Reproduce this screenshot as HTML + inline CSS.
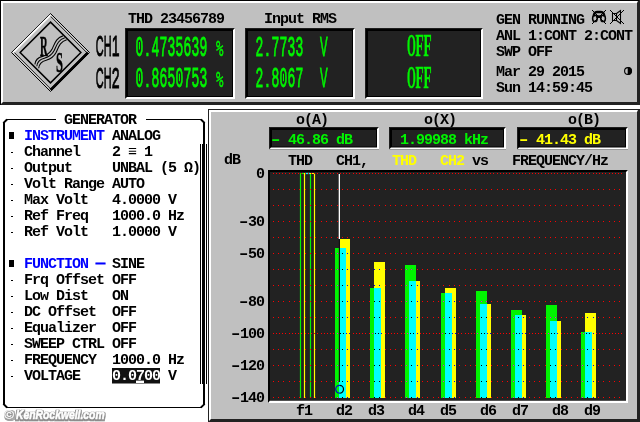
<!DOCTYPE html>
<html><head><meta charset="utf-8"><title>UPL</title>
<style>
html,body{margin:0;padding:0;background:#fff;overflow:hidden}
svg{display:block}
text{white-space:pre}
.m{font-family:"Liberation Mono",monospace;font-size:15px;letter-spacing:-1px}
</style></head><body>
<svg width="640" height="422" viewBox="0 0 640 422">
<rect width="640" height="422" fill="#fff"/>
<defs><filter id="ff" color-interpolation-filters="sRGB" filterUnits="userSpaceOnUse" x="0" y="0" width="640" height="422"><feOffset dx="0" dy="0" color-interpolation-filters="sRGB"/></filter></defs>
<g filter="url(#ff)">

<rect x="0" y="0" width="640" height="105" fill="#222"/>
<rect x="0" y="0" width="639" height="1" fill="#000"/><rect x="0" y="0" width="1" height="105" fill="#000"/>
<path d="M1 1H638L637 3H3V102L1 104Z" fill="#fff"/>
<rect x="3" y="3" width="634" height="99" fill="#c0c0c0"/>
<g fill="none" stroke-linejoin="miter">
<path d="M50.5 13.5L89.5 52.5L50.5 91.5L11.5 52.5Z" fill="#d0d0d0" stroke="#000" stroke-width="1"/>
<path d="M50.5 16.299999999999997L86.7 52.5M14.299999999999997 52.5L50.5 88.7" stroke="#000" stroke-width="1"/>
<path d="M13.200000000000003 52.5L50.5 15.200000000000003" stroke="#fff" stroke-width="1.7"/>
<path d="M87.9 52.5L50.5 89.9" stroke="#000" stroke-width="3"/>
<path d="M50.5 17.1L85.9 52.5L50.5 87.9L15.100000000000001 52.5Z" fill="#c0c0c0" stroke="none"/>
<path d="M50.5 22.1L80.9 52.5L50.5 82.9L20.1 52.5Z" fill="#c0c0c0" stroke="#000" stroke-width="1.5"/>
<path d="M36.5 66 C37 61 40 59 44 58 C49 56.5 52 54 54 50 C56.5 44.5 58 39.5 64.5 37.5" transform="translate(-1.6,-1.6)" stroke="#000" stroke-width="1.1"/>
<path d="M36.5 66 C37 61 40 59 44 58 C49 56.5 52 54 54 50 C56.5 44.5 58 39.5 64.5 37.5" transform="translate(0.3,0.3)" stroke="#000" stroke-width="1.1"/>
<path d="M36.5 66 C37 61 40 59 44 58 C49 56.5 52 54 54 50 C56.5 44.5 58 39.5 64.5 37.5" transform="translate(2.2,2.2)" stroke="#000" stroke-width="1.1"/>
</g>
<text transform="translate(43.8,55.8) scale(0.350,1)" font-weight="bold" text-anchor="middle" fill="#000" stroke="#000" stroke-width="0.4" style="font-family:'Liberation Serif',serif;font-size:30.5px;vector-effect:non-scaling-stroke" >R</text>
<text transform="translate(59.6,72.3) scale(0.410,1)" font-weight="bold" text-anchor="middle" fill="#000" stroke="#000" stroke-width="0.4" style="font-family:'Liberation Serif',serif;font-size:30.5px;vector-effect:non-scaling-stroke" >S</text>
<text transform="translate(99.6,55.6) scale(0.370,1)" font-weight="normal" text-anchor="middle" fill="#000" stroke="#000" stroke-width="0.75" style="font-family:'Liberation Sans',sans-serif;font-size:29.3px;vector-effect:non-scaling-stroke" >C</text><text transform="translate(107.6,55.6) scale(0.370,1)" font-weight="normal" text-anchor="middle" fill="#000" stroke="#000" stroke-width="0.75" style="font-family:'Liberation Sans',sans-serif;font-size:29.3px;vector-effect:non-scaling-stroke" >H</text><text transform="translate(115.6,55.6) scale(0.480,1)" font-weight="normal" text-anchor="middle" fill="#000" stroke="#000" stroke-width="0.75" style="font-family:'Liberation Sans',sans-serif;font-size:29.3px;vector-effect:non-scaling-stroke" >1</text>
<text transform="translate(99.6,87.6) scale(0.370,1)" font-weight="normal" text-anchor="middle" fill="#000" stroke="#000" stroke-width="0.75" style="font-family:'Liberation Sans',sans-serif;font-size:29.3px;vector-effect:non-scaling-stroke" >C</text><text transform="translate(107.6,87.6) scale(0.370,1)" font-weight="normal" text-anchor="middle" fill="#000" stroke="#000" stroke-width="0.75" style="font-family:'Liberation Sans',sans-serif;font-size:29.3px;vector-effect:non-scaling-stroke" >H</text><text transform="translate(115.6,87.6) scale(0.480,1)" font-weight="normal" text-anchor="middle" fill="#000" stroke="#000" stroke-width="0.75" style="font-family:'Liberation Sans',sans-serif;font-size:29.3px;vector-effect:non-scaling-stroke" >2</text>
<rect x="125" y="28" width="110" height="71" fill="#1e1e1e"/>
<rect x="126" y="29" width="109" height="70" fill="#000"/>
<path d="M235 28V99H125L127 97H233V30Z" fill="#fff"/>
<rect x="128" y="31" width="104" height="65" fill="#222"/>
<rect x="245" y="28" width="110" height="71" fill="#1e1e1e"/>
<rect x="246" y="29" width="109" height="70" fill="#000"/>
<path d="M355 28V99H245L247 97H353V30Z" fill="#fff"/>
<rect x="248" y="31" width="104" height="65" fill="#222"/>
<rect x="365" y="28" width="118" height="71" fill="#1e1e1e"/>
<rect x="366" y="29" width="117" height="70" fill="#000"/>
<path d="M483 28V99H365L367 97H481V30Z" fill="#fff"/>
<rect x="368" y="31" width="112" height="65" fill="#222"/>
<text transform="translate(139.5,55.5) scale(0.460,1)" font-weight="normal" text-anchor="middle" fill="#00f400" stroke="#00f400" stroke-width="0.75" style="font-family:'Liberation Sans',sans-serif;font-size:28.5px;vector-effect:non-scaling-stroke" >0</text><text transform="translate(147.5,55.5) scale(0.600,1)" font-weight="normal" text-anchor="middle" fill="#00f400" stroke="#00f400" stroke-width="0.6" style="font-family:'Liberation Sans',sans-serif;font-size:28.5px;vector-effect:non-scaling-stroke" >.</text><text transform="translate(155.5,55.5) scale(0.460,1)" font-weight="normal" text-anchor="middle" fill="#00f400" stroke="#00f400" stroke-width="0.75" style="font-family:'Liberation Sans',sans-serif;font-size:28.5px;vector-effect:non-scaling-stroke" >4</text><text transform="translate(163.5,55.5) scale(0.460,1)" font-weight="normal" text-anchor="middle" fill="#00f400" stroke="#00f400" stroke-width="0.75" style="font-family:'Liberation Sans',sans-serif;font-size:28.5px;vector-effect:non-scaling-stroke" >7</text><text transform="translate(171.5,55.5) scale(0.460,1)" font-weight="normal" text-anchor="middle" fill="#00f400" stroke="#00f400" stroke-width="0.75" style="font-family:'Liberation Sans',sans-serif;font-size:28.5px;vector-effect:non-scaling-stroke" >3</text><text transform="translate(179.5,55.5) scale(0.460,1)" font-weight="normal" text-anchor="middle" fill="#00f400" stroke="#00f400" stroke-width="0.75" style="font-family:'Liberation Sans',sans-serif;font-size:28.5px;vector-effect:non-scaling-stroke" >5</text><text transform="translate(187.5,55.5) scale(0.460,1)" font-weight="normal" text-anchor="middle" fill="#00f400" stroke="#00f400" stroke-width="0.75" style="font-family:'Liberation Sans',sans-serif;font-size:28.5px;vector-effect:non-scaling-stroke" >6</text><text transform="translate(195.5,55.5) scale(0.460,1)" font-weight="normal" text-anchor="middle" fill="#00f400" stroke="#00f400" stroke-width="0.75" style="font-family:'Liberation Sans',sans-serif;font-size:28.5px;vector-effect:non-scaling-stroke" >3</text><text transform="translate(203.5,55.5) scale(0.460,1)" font-weight="normal" text-anchor="middle" fill="#00f400" stroke="#00f400" stroke-width="0.75" style="font-family:'Liberation Sans',sans-serif;font-size:28.5px;vector-effect:non-scaling-stroke" >9</text> <text transform="translate(219.8,55.5) scale(0.560,1)" font-weight="normal" text-anchor="middle" fill="#00f400" stroke="#00f400" stroke-width="0.45" style="font-family:'DejaVu Sans Mono',monospace;font-size:22px;vector-effect:non-scaling-stroke" >%</text>
<rect x="138.9" y="42.0" width="1.1" height="7.5" fill="#00f400"/>
<text transform="translate(139.5,87.2) scale(0.460,1)" font-weight="normal" text-anchor="middle" fill="#00f400" stroke="#00f400" stroke-width="0.75" style="font-family:'Liberation Sans',sans-serif;font-size:28.5px;vector-effect:non-scaling-stroke" >0</text><text transform="translate(147.5,87.2) scale(0.600,1)" font-weight="normal" text-anchor="middle" fill="#00f400" stroke="#00f400" stroke-width="0.6" style="font-family:'Liberation Sans',sans-serif;font-size:28.5px;vector-effect:non-scaling-stroke" >.</text><text transform="translate(155.5,87.2) scale(0.460,1)" font-weight="normal" text-anchor="middle" fill="#00f400" stroke="#00f400" stroke-width="0.75" style="font-family:'Liberation Sans',sans-serif;font-size:28.5px;vector-effect:non-scaling-stroke" >8</text><text transform="translate(163.5,87.2) scale(0.460,1)" font-weight="normal" text-anchor="middle" fill="#00f400" stroke="#00f400" stroke-width="0.75" style="font-family:'Liberation Sans',sans-serif;font-size:28.5px;vector-effect:non-scaling-stroke" >6</text><text transform="translate(171.5,87.2) scale(0.460,1)" font-weight="normal" text-anchor="middle" fill="#00f400" stroke="#00f400" stroke-width="0.75" style="font-family:'Liberation Sans',sans-serif;font-size:28.5px;vector-effect:non-scaling-stroke" >5</text><text transform="translate(179.5,87.2) scale(0.460,1)" font-weight="normal" text-anchor="middle" fill="#00f400" stroke="#00f400" stroke-width="0.75" style="font-family:'Liberation Sans',sans-serif;font-size:28.5px;vector-effect:non-scaling-stroke" >0</text><text transform="translate(187.5,87.2) scale(0.460,1)" font-weight="normal" text-anchor="middle" fill="#00f400" stroke="#00f400" stroke-width="0.75" style="font-family:'Liberation Sans',sans-serif;font-size:28.5px;vector-effect:non-scaling-stroke" >7</text><text transform="translate(195.5,87.2) scale(0.460,1)" font-weight="normal" text-anchor="middle" fill="#00f400" stroke="#00f400" stroke-width="0.75" style="font-family:'Liberation Sans',sans-serif;font-size:28.5px;vector-effect:non-scaling-stroke" >5</text><text transform="translate(203.5,87.2) scale(0.460,1)" font-weight="normal" text-anchor="middle" fill="#00f400" stroke="#00f400" stroke-width="0.75" style="font-family:'Liberation Sans',sans-serif;font-size:28.5px;vector-effect:non-scaling-stroke" >3</text> <text transform="translate(219.8,87.2) scale(0.560,1)" font-weight="normal" text-anchor="middle" fill="#00f400" stroke="#00f400" stroke-width="0.45" style="font-family:'DejaVu Sans Mono',monospace;font-size:22px;vector-effect:non-scaling-stroke" >%</text>
<rect x="138.9" y="73.7" width="1.1" height="7.5" fill="#00f400"/><rect x="178.9" y="73.7" width="1.1" height="7.5" fill="#00f400"/>
<text transform="translate(259.5,55.5) scale(0.460,1)" font-weight="normal" text-anchor="middle" fill="#00f400" stroke="#00f400" stroke-width="0.75" style="font-family:'Liberation Sans',sans-serif;font-size:28.5px;vector-effect:non-scaling-stroke" >2</text><text transform="translate(267.5,55.5) scale(0.600,1)" font-weight="normal" text-anchor="middle" fill="#00f400" stroke="#00f400" stroke-width="0.6" style="font-family:'Liberation Sans',sans-serif;font-size:28.5px;vector-effect:non-scaling-stroke" >.</text><text transform="translate(275.5,55.5) scale(0.460,1)" font-weight="normal" text-anchor="middle" fill="#00f400" stroke="#00f400" stroke-width="0.75" style="font-family:'Liberation Sans',sans-serif;font-size:28.5px;vector-effect:non-scaling-stroke" >7</text><text transform="translate(283.5,55.5) scale(0.460,1)" font-weight="normal" text-anchor="middle" fill="#00f400" stroke="#00f400" stroke-width="0.75" style="font-family:'Liberation Sans',sans-serif;font-size:28.5px;vector-effect:non-scaling-stroke" >7</text><text transform="translate(291.5,55.5) scale(0.460,1)" font-weight="normal" text-anchor="middle" fill="#00f400" stroke="#00f400" stroke-width="0.75" style="font-family:'Liberation Sans',sans-serif;font-size:28.5px;vector-effect:non-scaling-stroke" >3</text><text transform="translate(299.5,55.5) scale(0.460,1)" font-weight="normal" text-anchor="middle" fill="#00f400" stroke="#00f400" stroke-width="0.75" style="font-family:'Liberation Sans',sans-serif;font-size:28.5px;vector-effect:non-scaling-stroke" >3</text> <text transform="translate(323.7,55.5) scale(0.400,1)" font-weight="normal" text-anchor="middle" fill="#00f400" stroke="#00f400" stroke-width="0.75" style="font-family:'Liberation Sans',sans-serif;font-size:28.5px;vector-effect:non-scaling-stroke" >V</text>

<text transform="translate(259.5,87.2) scale(0.460,1)" font-weight="normal" text-anchor="middle" fill="#00f400" stroke="#00f400" stroke-width="0.75" style="font-family:'Liberation Sans',sans-serif;font-size:28.5px;vector-effect:non-scaling-stroke" >2</text><text transform="translate(267.5,87.2) scale(0.600,1)" font-weight="normal" text-anchor="middle" fill="#00f400" stroke="#00f400" stroke-width="0.6" style="font-family:'Liberation Sans',sans-serif;font-size:28.5px;vector-effect:non-scaling-stroke" >.</text><text transform="translate(275.5,87.2) scale(0.460,1)" font-weight="normal" text-anchor="middle" fill="#00f400" stroke="#00f400" stroke-width="0.75" style="font-family:'Liberation Sans',sans-serif;font-size:28.5px;vector-effect:non-scaling-stroke" >8</text><text transform="translate(283.5,87.2) scale(0.460,1)" font-weight="normal" text-anchor="middle" fill="#00f400" stroke="#00f400" stroke-width="0.75" style="font-family:'Liberation Sans',sans-serif;font-size:28.5px;vector-effect:non-scaling-stroke" >0</text><text transform="translate(291.5,87.2) scale(0.460,1)" font-weight="normal" text-anchor="middle" fill="#00f400" stroke="#00f400" stroke-width="0.75" style="font-family:'Liberation Sans',sans-serif;font-size:28.5px;vector-effect:non-scaling-stroke" >6</text><text transform="translate(299.5,87.2) scale(0.460,1)" font-weight="normal" text-anchor="middle" fill="#00f400" stroke="#00f400" stroke-width="0.75" style="font-family:'Liberation Sans',sans-serif;font-size:28.5px;vector-effect:non-scaling-stroke" >7</text> <text transform="translate(323.7,87.2) scale(0.400,1)" font-weight="normal" text-anchor="middle" fill="#00f400" stroke="#00f400" stroke-width="0.75" style="font-family:'Liberation Sans',sans-serif;font-size:28.5px;vector-effect:non-scaling-stroke" >V</text>
<rect x="282.9" y="73.7" width="1.1" height="7.5" fill="#00f400"/>
<text transform="translate(411.5,56) scale(0.360,1)" font-weight="bold" text-anchor="middle" fill="#00f400" stroke="#00f400" stroke-width="0.45" style="font-family:'Liberation Serif',serif;font-size:31.5px;vector-effect:non-scaling-stroke" >O</text><text transform="translate(419.5,56) scale(0.420,1)" font-weight="bold" text-anchor="middle" fill="#00f400" stroke="#00f400" stroke-width="0.45" style="font-family:'Liberation Serif',serif;font-size:31.5px;vector-effect:non-scaling-stroke" >F</text><text transform="translate(427.5,56) scale(0.420,1)" font-weight="bold" text-anchor="middle" fill="#00f400" stroke="#00f400" stroke-width="0.45" style="font-family:'Liberation Serif',serif;font-size:31.5px;vector-effect:non-scaling-stroke" >F</text>
<text transform="translate(411.5,87.8) scale(0.360,1)" font-weight="bold" text-anchor="middle" fill="#00f400" stroke="#00f400" stroke-width="0.45" style="font-family:'Liberation Serif',serif;font-size:31.5px;vector-effect:non-scaling-stroke" >O</text><text transform="translate(419.5,87.8) scale(0.420,1)" font-weight="bold" text-anchor="middle" fill="#00f400" stroke="#00f400" stroke-width="0.45" style="font-family:'Liberation Serif',serif;font-size:31.5px;vector-effect:non-scaling-stroke" >F</text><text transform="translate(427.5,87.8) scale(0.420,1)" font-weight="bold" text-anchor="middle" fill="#00f400" stroke="#00f400" stroke-width="0.45" style="font-family:'Liberation Serif',serif;font-size:31.5px;vector-effect:non-scaling-stroke" >F</text>
<text class="m" x="127.9" y="23" fill="#000" font-weight="bold" >THD 23456789</text>
<text class="m" x="263.9" y="23" fill="#000" font-weight="bold" >Input RMS</text>
<text class="m" x="495.9" y="24" fill="#000" font-weight="bold" >GEN RUNNING</text>
<text class="m" x="495.9" y="40" fill="#000" font-weight="bold" >ANL 1:CONT 2:CONT</text>
<text class="m" x="495.9" y="56" fill="#000" font-weight="bold" >SWP OFF</text>
<text class="m" x="495.9" y="76" fill="#000" font-weight="bold" >Mar 29 2015</text>
<text class="m" x="495.9" y="92" fill="#000" font-weight="bold" >Sun 14:59:45</text>
<g fill="none" stroke="#000" stroke-width="1" stroke-linecap="butt">
<path d="M592 10L606 24M606 10L592 24"/>
<path d="M593.8 16.5Q593.6 12 597 12H601Q604.4 12 604.2 16.5" stroke-width="2.3"/>
<ellipse cx="594.9" cy="18.4" rx="2.3" ry="3.2" stroke-width="1.5"/><ellipse cx="603.1" cy="18.4" rx="2.3" ry="3.2" stroke-width="1.5"/>
<path d="M596.5 17.5L599 16L601.5 17.5" stroke-width="1.6"/>
<path d="M610 10L624 24M624 10L610 24"/>
<path d="M612.5 13.5H616.5V20.5H612.5ZM616.5 13.5L620.5 10.5V23.5L616.5 20.5" stroke-width="1.1"/>
</g>
<circle cx="628" cy="71" r="3.4" fill="none" stroke="#000" stroke-width="1.1"/><path d="M628 67.3A3.7 3.7 0 0 1 628 74.7Z" fill="#000" stroke="#000" stroke-width="0.6"/>
<path d="M6 119.5H56M146 119.5H202M6 407.5H202" fill="none" stroke="#000" stroke-width="1.1"/>
<path d="M4 122.5L6.5 120M201.5 120L204 122.5M4 404.5L6.5 407M201.5 407L204 404.5" fill="none" stroke="#000" stroke-width="1.9" stroke-linecap="square"/>
<rect x="3" y="122" width="2" height="283" fill="#000"/>
<rect x="203" y="122" width="2" height="283" fill="#000"/>
<rect x="200" y="144" width="1" height="240" fill="#000"/><rect x="202" y="144" width="3" height="240" fill="#000"/><rect x="206" y="144" width="1" height="240" fill="#000"/>
<text class="m" x="63.9" y="124" fill="#000" font-weight="bold" >GENERATOR</text>
<rect x="9" y="132" width="5" height="7" fill="#000"/>
<text class="m" x="23.9" y="140" fill="#0000ff" font-weight="bold" >INSTRUMENT</text>
<text class="m" x="111.9" y="140" fill="#000" font-weight="bold" >ANALOG</text>
<rect x="11" y="152" width="2" height="1" fill="#000"/>
<text class="m" x="23.9" y="156" fill="#000" font-weight="bold" >Channel</text>
<text class="m" x="111.9" y="156" fill="#000" font-weight="bold" >2 ≡ 1</text>
<rect x="11" y="168" width="2" height="1" fill="#000"/>
<text class="m" x="23.9" y="172" fill="#000" font-weight="bold" >Output</text>
<text class="m" x="111.9" y="172" fill="#000" font-weight="bold" >UNBAL (5 Ω)</text>
<rect x="11" y="184" width="2" height="1" fill="#000"/>
<text class="m" x="23.9" y="188" fill="#000" font-weight="bold" >Volt Range</text>
<text class="m" x="111.9" y="188" fill="#000" font-weight="bold" >AUTO</text>
<rect x="11" y="200" width="2" height="1" fill="#000"/>
<text class="m" x="23.9" y="204" fill="#000" font-weight="bold" >Max Volt</text>
<text class="m" x="111.9" y="204" fill="#000" font-weight="bold" >4.0000 V</text>
<rect x="11" y="216" width="2" height="1" fill="#000"/>
<text class="m" x="23.9" y="220" fill="#000" font-weight="bold" >Ref Freq</text>
<text class="m" x="111.9" y="220" fill="#000" font-weight="bold" >1000.0 Hz</text>
<rect x="11" y="232" width="2" height="1" fill="#000"/>
<text class="m" x="23.9" y="236" fill="#000" font-weight="bold" >Ref Volt</text>
<text class="m" x="111.9" y="236" fill="#000" font-weight="bold" >1.0000 V</text>
<rect x="9" y="260" width="5" height="7" fill="#000"/>
<text class="m" x="23.9" y="268" fill="#0000ff" font-weight="bold" >FUNCTION</text>
<text class="m" x="111.9" y="268" fill="#000" font-weight="bold" >SINE</text>
<text class="m" x="95.9" y="268" fill="#0000ff" font-weight="bold" stroke="#0000ff" stroke-width="1">─</text>
<rect x="11" y="280" width="2" height="1" fill="#000"/>
<text class="m" x="23.9" y="284" fill="#000" font-weight="bold" >Frq Offset</text>
<text class="m" x="111.9" y="284" fill="#000" font-weight="bold" >OFF</text>
<rect x="11" y="296" width="2" height="1" fill="#000"/>
<text class="m" x="23.9" y="300" fill="#000" font-weight="bold" >Low Dist</text>
<text class="m" x="111.9" y="300" fill="#000" font-weight="bold" >ON</text>
<rect x="11" y="312" width="2" height="1" fill="#000"/>
<text class="m" x="23.9" y="316" fill="#000" font-weight="bold" >DC Offset</text>
<text class="m" x="111.9" y="316" fill="#000" font-weight="bold" >OFF</text>
<rect x="11" y="328" width="2" height="1" fill="#000"/>
<text class="m" x="23.9" y="332" fill="#000" font-weight="bold" >Equalizer</text>
<text class="m" x="111.9" y="332" fill="#000" font-weight="bold" >OFF</text>
<rect x="11" y="344" width="2" height="1" fill="#000"/>
<text class="m" x="23.9" y="348" fill="#000" font-weight="bold" >SWEEP CTRL</text>
<text class="m" x="111.9" y="348" fill="#000" font-weight="bold" >OFF</text>
<rect x="11" y="360" width="2" height="1" fill="#000"/>
<text class="m" x="23.9" y="364" fill="#000" font-weight="bold" >FREQUENCY</text>
<text class="m" x="111.9" y="364" fill="#000" font-weight="bold" >1000.0 Hz</text>
<rect x="11" y="376" width="2" height="1" fill="#000"/>
<text class="m" x="23.9" y="380" fill="#000" font-weight="bold" >VOLTAGE</text>
<rect x="112" y="368" width="48" height="15.5" fill="#111"/>
<text class="m" x="111.9" y="380" fill="#fff" font-weight="bold" >0.0700</text>
<rect x="136" y="380.6" width="8" height="2.4" fill="#fff"/>
<text class="m" x="167.9" y="380" fill="#000" font-weight="bold" >V</text>
<defs><filter id="wmf" x="-10%" y="-40%" width="120%" height="190%" color-interpolation-filters="sRGB"><feMorphology in="SourceAlpha" operator="dilate" radius="1" result="d"/><feOffset in="d" dx="0.6" dy="0.5" result="o"/><feGaussianBlur in="o" stdDeviation="0.6" result="b"/><feFlood flood-color="#8c8c8c"/><feComposite in2="b" operator="in" result="sh"/><feMerge><feMergeNode in="sh"/><feMergeNode in="SourceGraphic"/></feMerge></filter></defs>
<text transform="translate(3.9,418.8) scale(1,1)" filter="url(#wmf)" font-weight="bold" font-style="italic" stroke-linejoin="round" fill="#fff" stroke="#fff" stroke-width="0.1" style="font-family:'Liberation Sans',sans-serif;font-size:13.4px">©</text> <text transform="translate(16.0,418.8) scale(0.785,1)" filter="url(#wmf)" font-weight="bold" font-style="italic" stroke-linejoin="round" fill="#fff" stroke="#fff" stroke-width="0.6" style="font-family:'Liberation Sans',sans-serif;font-size:13.2px">KenRockwell.com</text>
<rect x="208" y="109" width="432" height="313" fill="#222"/>
<path d="M209 110H638L637 112H211V419L209 421Z" fill="#fff"/>
<rect x="211" y="112" width="426" height="307" fill="#c0c0c0"/>
<text class="m" x="295.9" y="123.6" fill="#000" font-weight="bold" >o(A)</text>
<text class="m" x="423.9" y="123.6" fill="#000" font-weight="bold" >o(X)</text>
<text class="m" x="567.9" y="123.6" fill="#000" font-weight="bold" >o(B)</text>
<rect x="269" y="127" width="110" height="22.5" fill="#1e1e1e"/>
<rect x="270" y="128" width="109" height="21.5" fill="#000"/>
<path d="M379 127V149.5H269L271 147.5H377V129Z" fill="#fff"/>
<rect x="272" y="130" width="104" height="16.5" fill="#222"/>
<rect x="389" y="127" width="117" height="22.5" fill="#1e1e1e"/>
<rect x="390" y="128" width="116" height="21.5" fill="#000"/>
<path d="M506 127V149.5H389L391 147.5H504V129Z" fill="#fff"/>
<rect x="392" y="130" width="111" height="16.5" fill="#222"/>
<rect x="517" y="127" width="111" height="22.5" fill="#1e1e1e"/>
<rect x="518" y="128" width="110" height="21.5" fill="#000"/>
<path d="M628 127V149.5H517L519 147.5H626V129Z" fill="#fff"/>
<rect x="520" y="130" width="105" height="16.5" fill="#222"/>
<text class="m" transform="translate(275.6,144) scale(1.6,1)" text-anchor="middle" fill="#00f400" font-weight="bold" style="letter-spacing:0">-</text> <text class="m" x="287.9" y="144" fill="#00f400" font-weight="bold" >46.86 dB</text>
<text class="m" x="399.9" y="144" fill="#00f400" font-weight="bold" >1.99988 kHz</text>
<text class="m" transform="translate(523.6,144) scale(1.6,1)" text-anchor="middle" fill="#ffff00" font-weight="bold" style="letter-spacing:0">-</text> <text class="m" x="535.9" y="144" fill="#ffff00" font-weight="bold" >41.43 dB</text>
<text class="m" x="223.9" y="164" fill="#000" font-weight="bold" >dB</text>
<text class="m" x="287.9" y="164.7" fill="#000" font-weight="bold" >THD   CH1,</text>
<text class="m" x="391.9" y="164.7" fill="#ffff00" font-weight="bold" >THD   CH2</text>
<text class="m" x="471.9" y="164.7" fill="#000" font-weight="bold" >vs</text>
<text class="m" x="511.9" y="164.7" fill="#000" font-weight="bold" >FREQUENCY/Hz</text>
<rect x="268" y="170" width="360" height="233" fill="#000"/>
<path d="M628 170V403H268L270 400.5H626V172Z" fill="#fff"/>
<rect x="270" y="172" width="356" height="228.5" fill="#222"/>
<defs><pattern id="ps" x="273" y="173" width="16" height="16" patternUnits="userSpaceOnUse"><rect x="0" y="0" width="1" height="1" fill="#fff"/><rect x="5" y="0" width="1" height="1" fill="#fff"/><rect x="10" y="0" width="1" height="1" fill="#fff"/></pattern><pattern id="pd" x="273" y="173" width="16" height="160" patternUnits="userSpaceOnUse"><rect x="0" y="0" width="1" height="1" fill="#fff"/><rect x="3" y="0" width="1" height="1" fill="#fff"/><rect x="6" y="0" width="1" height="1" fill="#fff"/><rect x="9" y="0" width="1" height="1" fill="#fff"/><rect x="12" y="0" width="1" height="1" fill="#fff"/></pattern><mask id="dots" maskUnits="userSpaceOnUse" x="270" y="172" width="356" height="228"><rect x="273" y="189" width="351" height="130" fill="url(#ps)"/><rect x="273" y="349" width="351" height="50" fill="url(#ps)"/><rect x="273" y="173" width="351" height="225" fill="url(#pd)"/></mask></defs>
<text class="m" x="255.9" y="178.0" fill="#000" font-weight="bold" >0</text>
<text class="m" transform="translate(243.6,226.0) scale(1.6,1)" text-anchor="middle" fill="#000" font-weight="bold" style="letter-spacing:0">-</text><text class="m" x="247.9" y="226.0" fill="#000" font-weight="bold" >30</text>
<text class="m" transform="translate(243.6,258.0) scale(1.6,1)" text-anchor="middle" fill="#000" font-weight="bold" style="letter-spacing:0">-</text><text class="m" x="247.9" y="258.0" fill="#000" font-weight="bold" >50</text>
<text class="m" transform="translate(243.6,306.0) scale(1.6,1)" text-anchor="middle" fill="#000" font-weight="bold" style="letter-spacing:0">-</text><text class="m" x="247.9" y="306.0" fill="#000" font-weight="bold" >80</text>
<text class="m" transform="translate(235.6,338.0) scale(1.6,1)" text-anchor="middle" fill="#000" font-weight="bold" style="letter-spacing:0">-</text><text class="m" x="239.9" y="338.0" fill="#000" font-weight="bold" >100</text>
<text class="m" transform="translate(235.6,370.0) scale(1.6,1)" text-anchor="middle" fill="#000" font-weight="bold" style="letter-spacing:0">-</text><text class="m" x="239.9" y="370.0" fill="#000" font-weight="bold" >120</text>
<text class="m" transform="translate(235.6,402.0) scale(1.6,1)" text-anchor="middle" fill="#000" font-weight="bold" style="letter-spacing:0">-</text><text class="m" x="239.9" y="402.0" fill="#000" font-weight="bold" >140</text>
<path d="M300.5 398V173.5H310.5V398" fill="none" stroke="#00f400" stroke-width="1.2"/>
<path d="M304.5 398V173.5H314.5V398" fill="none" stroke="#ffff00" stroke-width="1.2"/>
<path d="M305 173.5H310" stroke="#00ffff" stroke-width="1.2"/>
<rect x="335" y="248" width="11" height="150" fill="#00f400"/>
<rect x="339" y="239" width="11" height="159" fill="#ffff00"/>
<rect x="339" y="248" width="7" height="150" fill="#00ffff"/>
<rect x="370" y="288" width="11" height="110" fill="#00f400"/>
<rect x="374" y="262" width="11" height="136" fill="#ffff00"/>
<rect x="374" y="288" width="7" height="110" fill="#00ffff"/>
<rect x="405" y="265" width="11" height="133" fill="#00f400"/>
<rect x="409" y="281" width="11" height="117" fill="#ffff00"/>
<rect x="409" y="281" width="7" height="117" fill="#00ffff"/>
<rect x="441" y="293" width="11" height="105" fill="#00f400"/>
<rect x="445" y="288" width="11" height="110" fill="#ffff00"/>
<rect x="445" y="293" width="7" height="105" fill="#00ffff"/>
<rect x="476" y="291" width="11" height="107" fill="#00f400"/>
<rect x="480" y="304" width="11" height="94" fill="#ffff00"/>
<rect x="480" y="304" width="7" height="94" fill="#00ffff"/>
<rect x="511" y="310" width="11" height="88" fill="#00f400"/>
<rect x="515" y="315" width="11" height="83" fill="#ffff00"/>
<rect x="515" y="315" width="7" height="83" fill="#00ffff"/>
<rect x="546" y="305" width="11" height="93" fill="#00f400"/>
<rect x="550" y="321" width="11" height="77" fill="#ffff00"/>
<rect x="550" y="321" width="7" height="77" fill="#00ffff"/>
<rect x="581" y="332" width="11" height="66" fill="#00f400"/>
<rect x="585" y="313" width="11" height="85" fill="#ffff00"/>
<rect x="585" y="332" width="7" height="66" fill="#00ffff"/>
<g mask="url(#dots)"><rect x="270" y="172" width="356" height="228" fill="#ff0000"/>
<rect x="335" y="248" width="11" height="150" fill="#ee00ee"/>
<rect x="339" y="239" width="11" height="159" fill="#0000ee"/>
<rect x="339" y="248" width="7" height="150" fill="#000"/>
<rect x="370" y="288" width="11" height="110" fill="#ee00ee"/>
<rect x="374" y="262" width="11" height="136" fill="#0000ee"/>
<rect x="374" y="288" width="7" height="110" fill="#000"/>
<rect x="405" y="265" width="11" height="133" fill="#ee00ee"/>
<rect x="409" y="281" width="11" height="117" fill="#0000ee"/>
<rect x="409" y="281" width="7" height="117" fill="#000"/>
<rect x="441" y="293" width="11" height="105" fill="#ee00ee"/>
<rect x="445" y="288" width="11" height="110" fill="#0000ee"/>
<rect x="445" y="293" width="7" height="105" fill="#000"/>
<rect x="476" y="291" width="11" height="107" fill="#ee00ee"/>
<rect x="480" y="304" width="11" height="94" fill="#0000ee"/>
<rect x="480" y="304" width="7" height="94" fill="#000"/>
<rect x="511" y="310" width="11" height="88" fill="#ee00ee"/>
<rect x="515" y="315" width="11" height="83" fill="#0000ee"/>
<rect x="515" y="315" width="7" height="83" fill="#000"/>
<rect x="546" y="305" width="11" height="93" fill="#ee00ee"/>
<rect x="550" y="321" width="11" height="77" fill="#0000ee"/>
<rect x="550" y="321" width="7" height="77" fill="#000"/>
<rect x="581" y="332" width="11" height="66" fill="#ee00ee"/>
<rect x="585" y="313" width="11" height="85" fill="#0000ee"/>
<rect x="585" y="332" width="7" height="66" fill="#000"/>
</g>
<rect x="338.7" y="174" width="1.3" height="65" fill="#fff"/>
<rect x="338.8" y="239" width="1.2" height="143" fill="#111"/>
<path d="M339.6 385.4A3.9 3.9 0 0 0 339.6 393.2" fill="none" stroke="#0000d0" stroke-width="1.2"/><path d="M339.6 385.4A3.9 3.9 0 0 1 339.6 393.2" fill="none" stroke="#000" stroke-width="1.2"/>
<text class="m" x="295.9" y="415.2" fill="#000" font-weight="bold" >f1</text>
<text class="m" x="335.9" y="415.2" fill="#000" font-weight="bold" >d2</text>
<text class="m" x="367.9" y="415.2" fill="#000" font-weight="bold" >d3</text>
<text class="m" x="407.9" y="415.2" fill="#000" font-weight="bold" >d4</text>
<text class="m" x="439.9" y="415.2" fill="#000" font-weight="bold" >d5</text>
<text class="m" x="479.9" y="415.2" fill="#000" font-weight="bold" >d6</text>
<text class="m" x="511.9" y="415.2" fill="#000" font-weight="bold" >d7</text>
<text class="m" x="551.9" y="415.2" fill="#000" font-weight="bold" >d8</text>
<text class="m" x="583.9" y="415.2" fill="#000" font-weight="bold" >d9</text>
</g></svg></body></html>
